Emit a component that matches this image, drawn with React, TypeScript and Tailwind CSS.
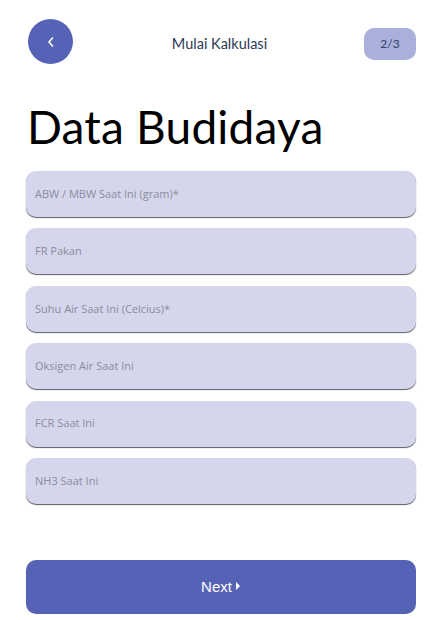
import React from "react";

const fields = [
  "ABW / MBW Saat Ini (gram)*",
  "FR Pakan",
  "Suhu Air Saat Ini (Celcius)*",
  "Oksigen Air Saat Ini",
  "FCR Saat Ini",
  "NH3 Saat Ini",
];

export default function App() {
  return (
    <div className="w-[442px] h-[620px] bg-white font-['Lato',sans-serif] px-[26px] pt-[19px]">
      {/* header */}
      <div className="flex items-center justify-between">
        <button className="w-[45px] h-[45px] ml-[2px] rounded-full bg-[#5562b5] flex items-center justify-center">
          <svg width="10" height="12" viewBox="0 0 10 12" fill="none">
            <path d="M6.5 2 L3 6 L6.5 10" stroke="white" strokeWidth="1.6" strokeLinecap="round" strokeLinejoin="round" />
          </svg>
        </button>
        <p className="text-[14.5px] text-[#2b3a55] mt-[5px] ml-[2px]">Mulai Kalkulasi</p>
        <div className="w-[52px] h-[32px] rounded-[10px] bg-[#a9b0dc] flex items-center justify-center text-[12px] text-[#34405e] mt-[4px]">
          2/3
        </div>
      </div>

      <h1 className="text-[46px] leading-none text-black mt-[40px] ml-[1px] tracking-[0.2px]">Data Budidaya</h1>

      <div className="flex flex-col gap-[11.4px] mt-[21px]">
        {fields.map((f) => (
          <div
            key={f}
            className="h-[46px] rounded-[10px] bg-[#d5d6ec] shadow-[0_1px_1px_#5a5a66] flex items-center px-[9px]"
          >
            <span className="text-[11px] text-[#8b8c9c] font-['Open_Sans',sans-serif]">{f}</span>
          </div>
        ))}
      </div>

      <button className="w-full h-[54px] mt-[56px] rounded-[10px] bg-[#5662b5] flex items-center justify-center text-white text-[15px] font-['Liberation_Sans',sans-serif]">
        Next
        <svg width="6" height="10" viewBox="0 0 6 10" className="ml-[3px] mb-[2px]">
          <path d="M1 1 L5 5 L1 9 Z" fill="white" />
        </svg>
      </button>
    </div>
  );
}
